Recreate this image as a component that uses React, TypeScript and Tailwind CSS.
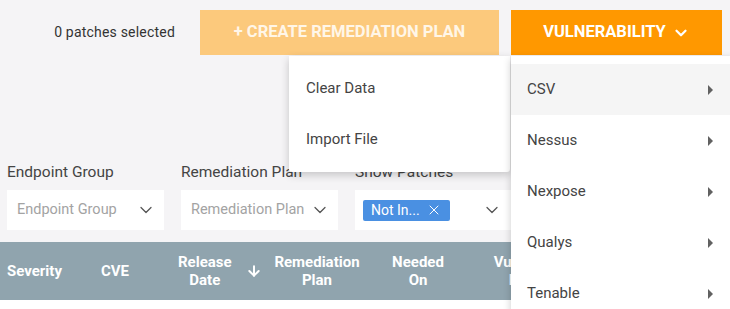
import { ChevronDown, X, ArrowDown } from "lucide-react";

const filters = [
  { label: "Endpoint Group", placeholder: "Endpoint Group" },
  { label: "Remediation Plan", placeholder: "Remediation Plan" },
];

const importers = ["CSV", "Nessus", "Nexpose", "Qualys", "Tenable"];

function Caret() {
  return (
    <svg width="7" height="12" viewBox="0 0 7 12" className="text-[#616161]">
      <path d="M1 1 L6 6 L1 11 Z" fill="currentColor" />
    </svg>
  );
}

export default function App() {
  return (
    <div className="relative w-[730px] h-[309px] overflow-hidden bg-[#f5f4f6] font-['Roboto',sans-serif]">
      {/* toolbar */}
      <div className="flex items-center justify-end gap-3 pt-[10px] pr-2">
        <span className="mr-[13px] text-[14px] tracking-[0.2px] text-[#333]">0 patches selected</span>
        <button className="h-[45px] w-[299px] bg-[#fcc97c] text-[16.5px] font-bold uppercase text-[#fff6e8]">
          + Create Remediation Plan
        </button>
        <button className="flex h-[45px] w-[211px] items-center justify-center gap-1.5 bg-[#ff9800] text-[16.5px] font-bold uppercase text-white">
          Vulnerability
          <ChevronDown className="h-[18px] w-[18px]" strokeWidth={3} />
        </button>
      </div>

      {/* filters */}
      <div className="mt-[109px] flex gap-[17px] pl-[7px]">
        {filters.map((f) => (
          <div key={f.label} className="w-[157px]">
            <div className="mb-[10px] whitespace-nowrap text-[15.5px] leading-[16px] text-[#444]">{f.label}</div>
            <div className="flex h-[40px] items-center justify-between bg-white pl-[10px] pr-[8px]">
              <span className="whitespace-nowrap text-[14.5px] text-[#a3a3a3]">{f.placeholder}</span>
              <ChevronDown className="-ml-3 h-5 w-5 shrink-0 text-[#555]" strokeWidth={1.5} />
            </div>
          </div>
        ))}
        <div className="w-[157px]">
          <div className="mb-[10px] whitespace-nowrap text-[15.5px] leading-[16px] text-[#444]">Show Patches</div>
          <div className="flex h-[40px] items-center justify-between bg-white pl-[8px] pr-[10px]">
            <span className="flex h-[21px] items-center gap-[6px] rounded-[2px] bg-[#4a90e2] px-[8px] text-[14px] text-white">
              Not In...
              <X className="h-[16px] w-[16px]" strokeWidth={1.5} />
            </span>
            <ChevronDown className="h-5 w-5 text-[#555]" strokeWidth={1.5} />
          </div>
        </div>
      </div>

      {/* table header */}
      <div className="mt-[12px] flex h-[58px] items-center bg-[#90a4ae] text-[15px] font-bold leading-[18px] text-white">
        <div className="w-[101px] pl-[7px]">Severity</div>
        <div className="w-[77px]">CVE</div>
        <div className="flex w-[92px] items-center gap-[14px]">
          <span className="text-center">Release<br />Date</span>
          <ArrowDown className="h-4 w-4" strokeWidth={3} />
        </div>
        <div className="w-[94px] text-center">Remediation<br />Plan</div>
        <div className="w-[108px] text-center">Needed<br />On</div>
        <div className="w-[128px] text-center">Vulnerability<br />Fix Date</div>
      </div>
      <div className="h-[9px] bg-white" />

      {/* remediation plan menu */}
      <div className="absolute left-[289px] top-[56px] w-[221px] rounded-b-[3px] bg-white py-[7px] shadow-[0_3px_8px_rgba(0,0,0,0.2)]">
        {["Clear Data", "Import File"].map((item) => (
          <div key={item} className="flex h-[51px] items-center px-[17px] text-[15px] text-[#444]">
            {item}
          </div>
        ))}
      </div>

      {/* vulnerability menu */}
      <div className="absolute left-[511px] top-[56px] w-[225px] bg-white pt-[8px] shadow-[0_3px_8px_rgba(0,0,0,0.2)]">
        {importers.map((item, i) => (
          <div
            key={item}
            className={`flex h-[51px] items-center justify-between pl-[16px] pr-[22px] text-[15px] text-[#444] ${
              i === 0 ? "bg-[#f5f5f5]" : ""
            }`}
          >
            {item}
            <Caret />
          </div>
        ))}
      </div>
    </div>
  );
}
